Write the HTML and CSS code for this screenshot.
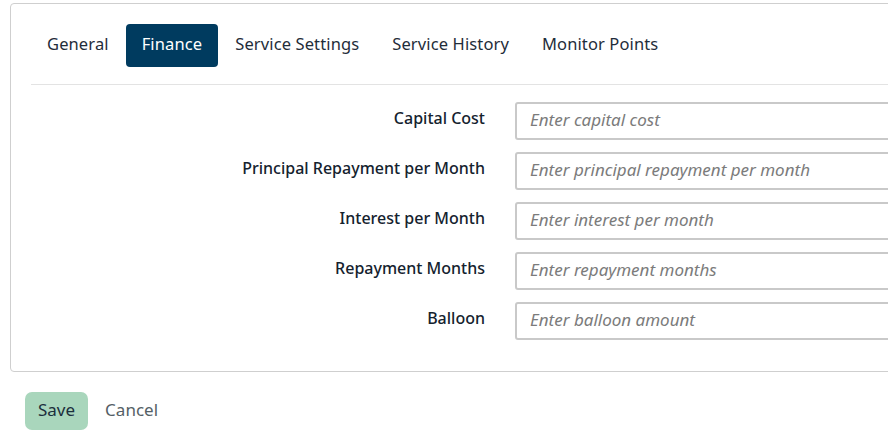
FILE: index.html
```html
<!DOCTYPE html>
<html>
<head>
<meta charset="utf-8">
<link rel="stylesheet" href="styles.css">
</head>
<body>
<div class="page">
  <div class="card">
    <nav class="tabs">
      <span class="tab">General</span>
      <span class="tab active">Finance</span>
      <span class="tab">Service Settings</span>
      <span class="tab">Service History</span>
      <span class="tab">Monitor Points</span>
    </nav>
    <div class="form">
      <label class="label">Capital Cost</label>
      <input class="input" placeholder="Enter capital cost">
      <label class="label">Principal Repayment per Month</label>
      <input class="input" placeholder="Enter principal repayment per month">
      <label class="label">Interest per Month</label>
      <input class="input" placeholder="Enter interest per month">
      <label class="label">Repayment Months</label>
      <input class="input" placeholder="Enter repayment months">
      <label class="label">Balloon</label>
      <input class="input" placeholder="Enter balloon amount">
    </div>
  </div>
  <div class="actions">
    <button class="btn save">Save</button>
    <button class="btn cancel">Cancel</button>
  </div>
</div>
</body>
</html>
```

FILE: styles.css
```css
html, body {
  margin: 0;
  padding: 0;
  overflow: hidden;
  background: #fff;
}
body {
  font-family: "Noto Sans", "Open Sans", sans-serif;
  color: #1d2b36;
}
.page {
  padding: 3px 0 0 10px;
  width: 1100px;
}
.card {
  border: 1px solid #cfcfcf;
  border-radius: 4px;
  padding: 20px 0 31px 20px;
}
.tabs {
  display: flex;
  gap: 1px;
  border-bottom: 1px solid #e3e3e3;
  padding-bottom: 17px;
  margin-bottom: 17px;
}
.tab {
  padding: 0 16px 4px;
  height: 43px;
  box-sizing: border-box;
  display: flex;
  align-items: center;
  font-size: 16.5px;
  letter-spacing: 0.12px;
  color: #1f2d3a;
  border-radius: 4px;
}
.tab.active {
  background: #003b5f;
  color: #fff;
}
.form {
  display: grid;
  grid-template-columns: 454px 1fr;
  column-gap: 30px;
  row-gap: 12px;
}
.label {
  text-align: right;
  font-size: 16px;
  font-weight: 500;
  color: #14222e;
  padding-top: 5px;
}
.input {
  height: 38px;
  box-sizing: border-box;
  border: 2px solid #c9c9c9;
  border-radius: 3px;
  padding: 0 13px 4px;
  font-family: inherit;
  font-size: 17px;
  outline: none;
}
.input::placeholder {
  font-style: italic;
  color: #7b7b7b;
}
.actions {
  display: flex;
  align-items: center;
  gap: 1px;
  margin-top: 20px;
  padding-left: 15px;
}
.btn {
  font-family: inherit;
  font-size: 17px;
  border: none;
  height: 38px;
  padding: 0 16px 4px;
  border-radius: 7px;
  background: transparent;
}
.btn.save {
  background: #a9d6bc;
  color: #1b2f3c;
  padding: 0 13px 4px;
}
.btn.cancel {
  color: #555f66;
}
```
